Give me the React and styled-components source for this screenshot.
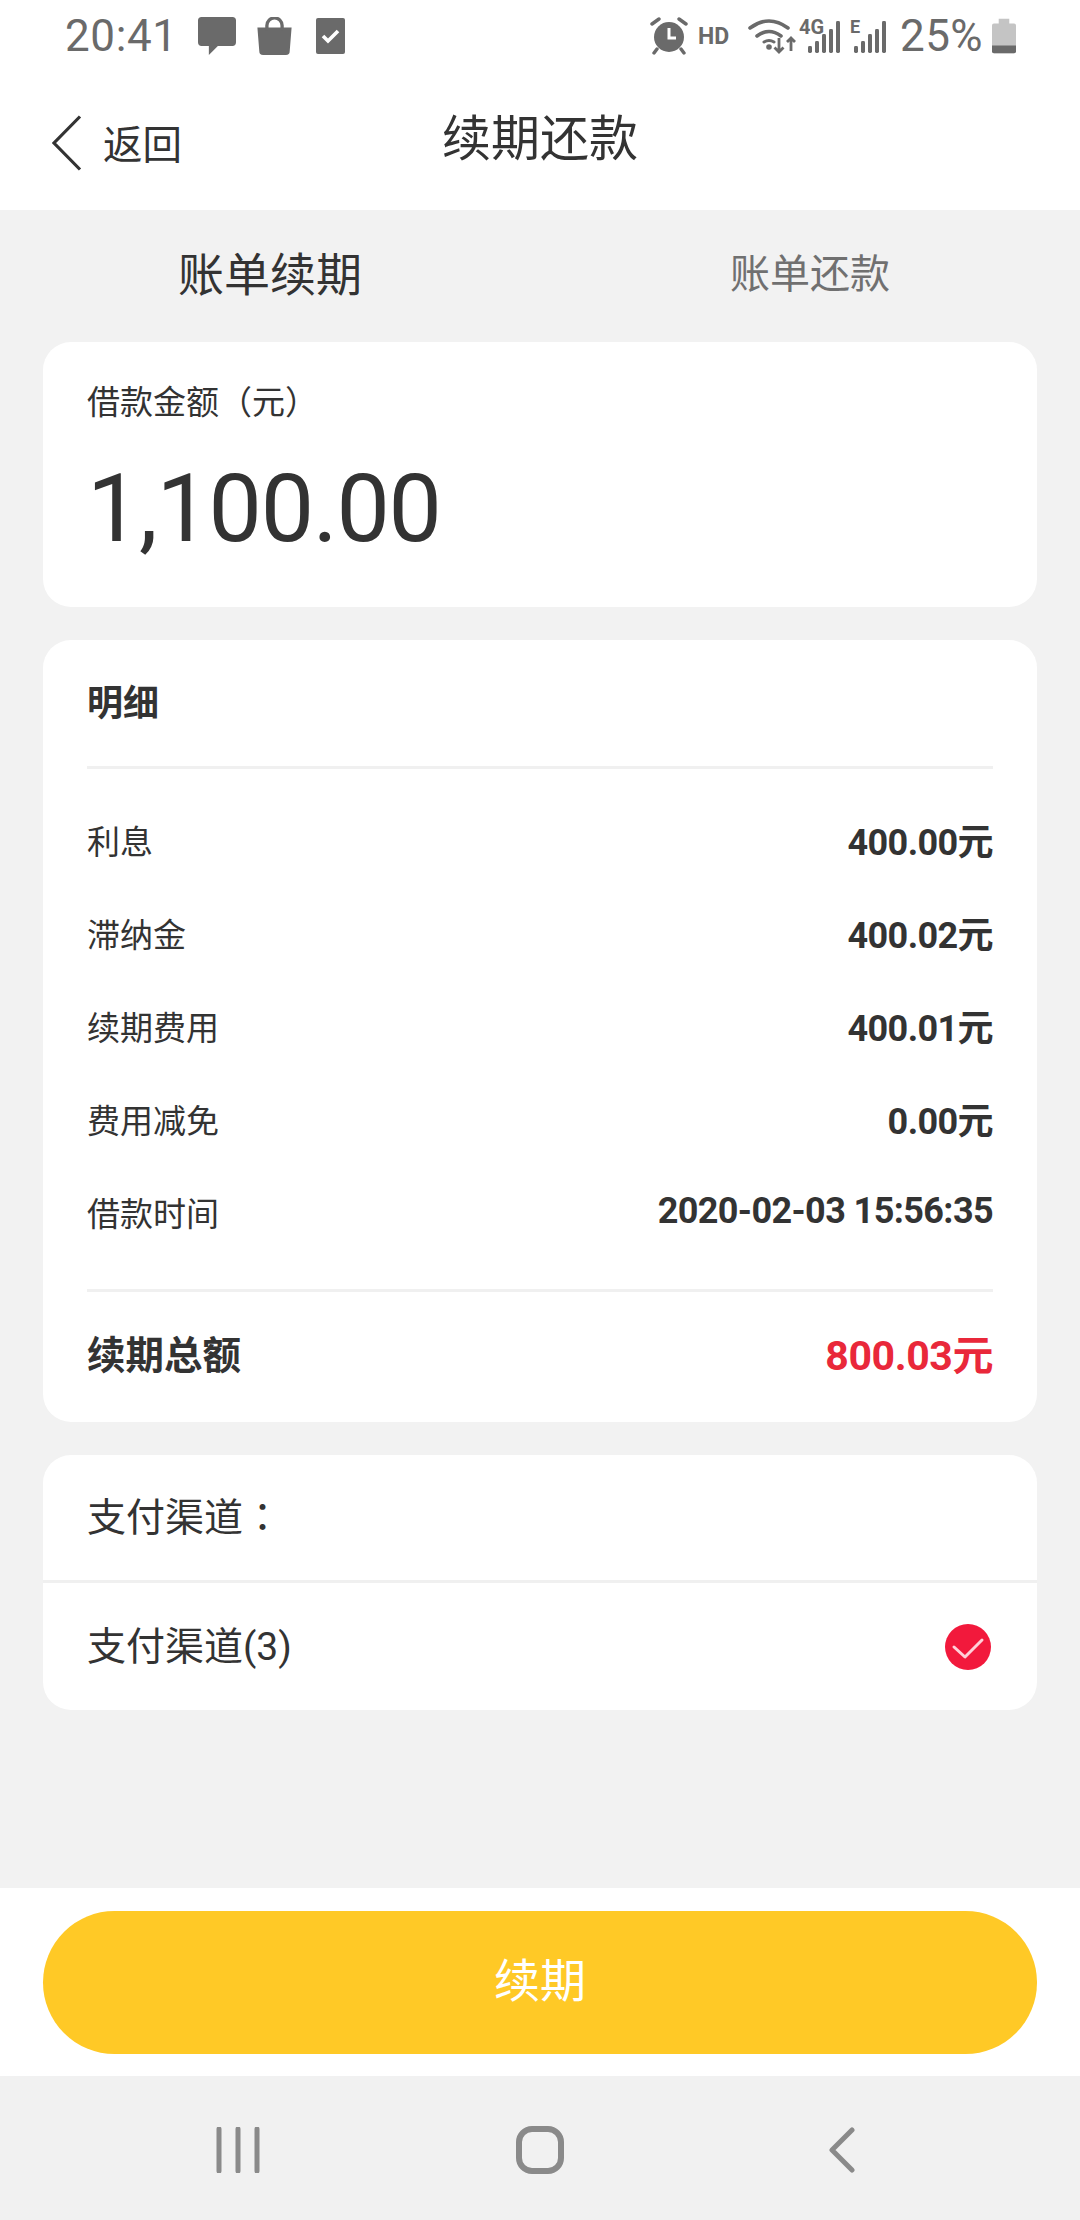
import styled, { createGlobalStyle } from "styled-components"

const GlobalStyle = createGlobalStyle`
html, body {
    margin: 0;
    padding: 0;
    background: #f2f2f2;
}
* {
    box-sizing: border-box;
}
`;

const FONT = `Roboto, "Noto Sans CJK SC", sans-serif`;

const Page = styled.div`
width: 1080px;
height: 2220px;
display: flex;
flex-direction: column;
background: #f2f2f2;
color: #333;
font-family: ${FONT};
`;

// status bar
const StatusBar = styled.div`
height: 76px;
flex: none;
display: flex;
align-items: center;
justify-content: space-between;
padding: 0 64px 4px 65px;
background: #fff;
color: #6a6a6a;
`;

const StatusGroup = styled.div`
display: flex;
align-items: center;
`;

const Clock = styled.span`
font-size: 44px;
margin-right: 20px;
letter-spacing: 0.6px;
`;

const Battery = styled.span`
font-size: 44px;
letter-spacing: 0.4px;
margin: 0 9px 0 14px;
`;

const HdLabel = styled.span`
font-size: 23px;
font-weight: 700;
margin: 0 19px 0 10px;
`;

const Svg = styled.svg`
display: block;
flex: none;
margin-left: ${p => p.$gap || 0}px;
`;

const SignalBox = styled.div`
position: relative;
flex: none;
width: ${p => p.$width}px;
height: 34px;
margin-left: ${p => p.$gap}px;
`;

const SignalLabel = styled.span`
position: absolute;
left: 0;
top: -3px;
font-size: ${p => p.$size}px;
line-height: 22px;
font-weight: 700;
`;

// title bar
const Header = styled.div`
height: 134px;
flex: none;
display: flex;
align-items: center;
position: relative;
background: #fff;
padding-left: 52px;
`;

const BackLabel = styled.span`
font-size: 39.5px;
margin-left: 21px;
margin-bottom: 3px;
color: #333;
`;

const Title = styled.div`
position: absolute;
left: 0;
right: 0;
top: 34px;
text-align: center;
font-size: 49px;
line-height: 60px;
color: #333;
`;

const Tabs = styled.div`
height: 132px;
flex: none;
display: grid;
grid-template-columns: 540px 540px;
align-items: center;
padding-bottom: 10px;
`;

const Tab = styled.div`
text-align: center;
font-size: ${p => (p.$active ? 46 : 40)}px;
color: ${p => (p.$active ? "#333" : "#707070")};
`;

const Card = styled.div`
margin: 0 43px 33px;
background: #fff;
border-radius: 28px;
`;

const AmountCard = styled(Card)`
height: 265px;
padding: 41px 44px 0;
`;

const AmountLabel = styled.div`
font-size: 33px;
line-height: 40px;
color: #333;
`;

const Amount = styled.div`
font-size: 95px;
letter-spacing: -1.3px;
line-height: 112px;
margin-top: 30px;
color: #333;
`;

const DetailCard = styled(Card)`
height: 782px;
padding: 0 44px;
display: flex;
flex-direction: column;
`;

const DetailTitle = styled.div`
height: 129px;
flex: none;
display: flex;
align-items: center;
padding-bottom: 6px;
font-size: 36px;
font-weight: 700;
border-bottom: 3px solid #f0f0f0;
`;

const Rows = styled.div`
height: 523px;
flex: none;
padding-top: 24px;
border-bottom: 3px solid #f0f0f0;
`;

const Row = styled.div`
height: 93px;
display: flex;
align-items: center;
justify-content: space-between;
font-size: 33px;
`;

const RowValue = styled.span`
font-size: 36px;
letter-spacing: -0.6px;
font-weight: 700;
margin-bottom: 2px;
`;

const TotalRow = styled.div`
flex: 1;
display: flex;
align-items: center;
justify-content: space-between;
padding-bottom: 10px;
font-size: 38.5px;
font-weight: 700;
`;

const TotalValue = styled.span`
font-size: 41px;
letter-spacing: -0.4px;
color: #e9283a;
`;

const ChannelCard = styled(Card)`
height: 255px;
margin-bottom: 0;
`;

const ChannelRow = styled.div`
height: ${p => p.$h}px;
display: flex;
align-items: center;
justify-content: space-between;
padding: 0 46px 0 44px;
font-size: 39px;
border-bottom: ${p => (p.$line ? "3px solid #f0f0f0" : "none")};
`;

const ChannelText = styled.span`
margin-bottom: 8px;
`;

// the full-width colon sits centred in its box in the TC face
const FullColon = styled.span`
font-family: "Noto Sans CJK TC", sans-serif;
`;

const Spacer = styled.div`
flex: 1;
`;

const Footer = styled.div`
height: 188px;
flex: none;
display: flex;
align-items: center;
padding: 0 43px;
background: #fff;
`;

const SubmitButton = styled.button`
width: 100%;
height: 143px;
border: none;
border-radius: 72px;
padding: 0 0 10px;
background: #ffc926;
color: #fff;
font-family: ${FONT};
font-size: 46px;
`;

const NavBar = styled.div`
height: 144px;
flex: none;
display: grid;
grid-template-columns: repeat(3, 302px);
justify-content: center;
align-items: center;
justify-items: center;
padding-top: 4px;
background: #f1f1f1;
`;

const MessageIcon = () => (
    <Svg width="38" height="38" viewBox="0 0 42 42" fill="#6a6a6a">
        <path d="M4 0h34a4 4 0 0 1 4 4v24a4 4 0 0 1-4 4H22L12 42V32H4a4 4 0 0 1-4-4V4a4 4 0 0 1 4-4z" />
    </Svg>
);

const BagIcon = () => (
    <Svg $gap={21} width="35" height="38" viewBox="0 0 36 40">
        <path d="M0 11h36l-2 25a4 4 0 0 1-4 4H6a4 4 0 0 1-4-4z" fill="#6a6a6a" />
        <path d="M10 14V9a8 8 0 0 1 16 0v5" fill="none" stroke="#6a6a6a" strokeWidth="3.5" />
    </Svg>
);

const TaskIcon = () => (
    <Svg $gap={24} width="29" height="36" viewBox="0 0 29 36">
        <rect width="29" height="36" rx="2" fill="#6a6a6a" />
        <path d="M7 18l5 5 10-10" fill="none" stroke="#fff" strokeWidth="3.6" />
    </Svg>
);

const AlarmIcon = () => (
    <Svg width="38" height="38" viewBox="0 0 38 38">
        <circle cx="19" cy="20" r="15" fill="#6a6a6a" />
        <path d="M19 11v10h7" fill="none" stroke="#fff" strokeWidth="3" />
        <path d="M2 7l7-5M36 7l-7-5M7 32l-3 4M31 32l3 4" stroke="#6a6a6a" strokeWidth="3.4" strokeLinecap="round" />
    </Svg>
);

const WifiIcon = () => (
    <Svg width="48" height="36" viewBox="0 0 48 36" fill="none">
        <path d="M2 10Q21-4 40 10M9 18Q21 9 33 18" stroke="#6a6a6a" strokeWidth="3.6" strokeLinecap="round" />
        <path d="M16 24q5-3 10 0" stroke="#6a6a6a" strokeWidth="3" strokeLinecap="round" />
        <circle cx="21" cy="29" r="2.8" fill="#6a6a6a" />
        <path d="M31 20v14M26.5 29.5l4.5 4.5 4.5-4.5M43 33V20M39 24l4-4 4 4" stroke="#6a6a6a" strokeWidth="2.8" />
    </Svg>
);

const SIGNAL_HEIGHTS = [7, 12, 19, 24, 32];

// five signal bars with the network type printed over the short ones
const SignalIcon = ({ label, gap, width, barStart, labelSize }) => (
    <SignalBox $gap={gap} $width={width}>
        <SignalLabel $size={labelSize}>{label}</SignalLabel>
        <Svg width={width} height="34" viewBox={`0 0 ${width} 34`}>
            {SIGNAL_HEIGHTS.map((h, i) => (
                <rect key={h} x={barStart + i * 7} y={34 - h} width="4" height={h} rx="1.4" fill="#6a6a6a" />
            ))}
        </Svg>
    </SignalBox>
);

const BatteryIcon = () => (
    <Svg width="24" height="36" viewBox="0 0 25 36">
        <path d="M7 0h11v5h5a2 2 0 0 1 2 2v27a2 2 0 0 1-2 2H2a2 2 0 0 1-2-2V7a2 2 0 0 1 2-2h5z" fill="#c4c4c4" />
        <path d="M0 28h25v6a2 2 0 0 1-2 2H2a2 2 0 0 1-2-2z" fill="#6a6a6a" />
    </Svg>
);

const BackIcon = () => (
    <Svg width="30" height="56" viewBox="0 0 30 56" fill="none">
        <path d="M28 1.5L2 28l26 26.5" stroke="#333" strokeWidth="3.2" />
    </Svg>
);

const CheckBadge = () => (
    <Svg width="46" height="46" viewBox="0 0 46 46">
        <circle cx="23" cy="23" r="23" fill="#f2193c" />
        <path d="M9 23l11 10 17-17" fill="none" stroke="#ffd0d8" strokeWidth="3" strokeLinecap="round" strokeLinejoin="round" />
    </Svg>
);

const details = [
    ["利息", "400.00元"],
    ["滞纳金", "400.02元"],
    ["续期费用", "400.01元"],
    ["费用减免", "0.00元"],
    ["借款时间", "2020-02-03 15:56:35"],
];

const App = () => {
    return (
        <Page>
            <GlobalStyle />

            <StatusBar>
                <StatusGroup>
                    <Clock>20:41</Clock>
                    <MessageIcon />
                    <BagIcon />
                    <TaskIcon />
                </StatusGroup>
                <StatusGroup>
                    <AlarmIcon />
                    <HdLabel>HD</HdLabel>
                    <WifiIcon />
                    <SignalIcon label="4G" gap={3} width={42} barStart={9} labelSize={20} />
                    <SignalIcon label="E" gap={9} width={36} barStart={4} labelSize={18} />
                    <Battery>25%</Battery>
                    <BatteryIcon />
                </StatusGroup>
            </StatusBar>

            <Header>
                <BackIcon />
                <BackLabel>返回</BackLabel>
                <Title>续期还款</Title>
            </Header>

            <Tabs>
                <Tab $active>账单续期</Tab>
                <Tab>账单还款</Tab>
            </Tabs>

            <AmountCard>
                <AmountLabel>借款金额（元）</AmountLabel>
                <Amount>1,100.00</Amount>
            </AmountCard>

            <DetailCard>
                <DetailTitle>明细</DetailTitle>
                <Rows>
                    {details.map(([name, value]) => (
                        <Row key={name}>
                            <span>{name}</span>
                            <RowValue>{value}</RowValue>
                        </Row>
                    ))}
                </Rows>
                <TotalRow>
                    <span>续期总额</span>
                    <TotalValue>800.03元</TotalValue>
                </TotalRow>
            </DetailCard>

            <ChannelCard>
                <ChannelRow $h={128} $line>
                    <ChannelText>支付渠道<FullColon>：</FullColon></ChannelText>
                </ChannelRow>
                <ChannelRow $h={127}>
                    <ChannelText>支付渠道(3)</ChannelText>
                    <CheckBadge />
                </ChannelRow>
            </ChannelCard>

            <Spacer />

            <Footer>
                <SubmitButton>续期</SubmitButton>
            </Footer>

            <NavBar>
                <Svg width="44" height="46" viewBox="0 0 44 46">
                    <path d="M3 2v42M22 2v42M41 2v42" stroke="#8a8a8a" strokeWidth="5" strokeLinecap="round" />
                </Svg>
                <Svg width="48" height="48" viewBox="0 0 48 48" fill="none">
                    <rect x="3" y="3" width="42" height="42" rx="13" stroke="#8a8a8a" strokeWidth="6" />
                </Svg>
                <Svg width="26" height="46" viewBox="0 0 26 46" fill="none">
                    <path d="M23 3L3 23l20 20" stroke="#8a8a8a" strokeWidth="5" strokeLinecap="round" strokeLinejoin="round" />
                </Svg>
            </NavBar>
        </Page>
    )
}
export default App
